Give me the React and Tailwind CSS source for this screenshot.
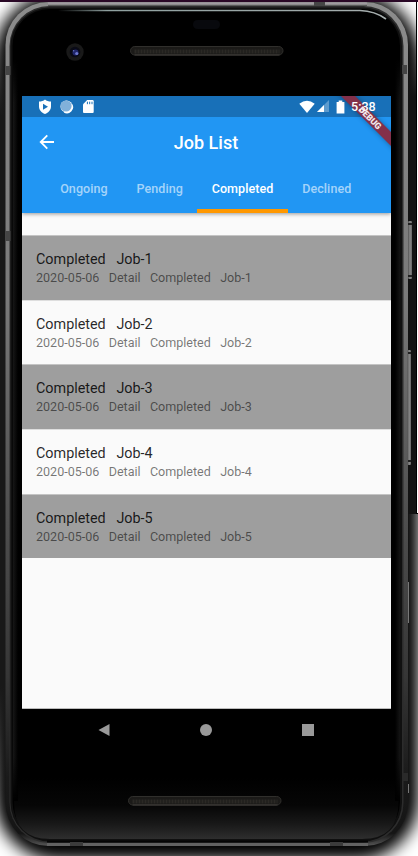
import React from "react";

const tabs = ["Ongoing", "Pending", "Completed", "Declined"];
const jobs = [1, 2, 3, 4, 5];

function Grille({ x, y }) {
  return (
    <g>
      <rect x={x} y={y} width="152.500" height="8.500" rx="4.250" fill="#1b1a18" stroke="#302f2c" />
      <path d={`M${x + 4} ${y + 5}h145`} stroke="#2b2925" strokeWidth="4" strokeDasharray="2 1" />
      <path d={`M${x + 4} ${y + 8.5}h145`} stroke="#4a4741" strokeWidth="0.8" />
    </g>
  );
}

function PhoneBody() {
  return (
    <svg className="absolute inset-0" width="418" height="856" viewBox="0 0 418 856" aria-hidden="true">
      <defs>
        <filter id="shadow" x="-20%" y="-20%" width="140%" height="140%">
          <feGaussianBlur stdDeviation="8" />
        </filter>
        <linearGradient id="metal" x1="0" y1="0" x2="0" y2="1">
          <stop offset="0" stopColor="#8c8c8c" />
          <stop offset="0.35" stopColor="#7a7a7a" />
          <stop offset="0.6" stopColor="#505050" />
          <stop offset="0.8" stopColor="#363636" />
          <stop offset="0.92" stopColor="#1a1a1a" />
          <stop offset="0.985" stopColor="#151515" />
          <stop offset="1" stopColor="#555" />
        </linearGradient>
        <linearGradient id="chin" x1="0" y1="0" x2="0" y2="1">
          <stop offset="0" stopColor="#000" />
          <stop offset="0.45" stopColor="#060606" />
          <stop offset="0.75" stopColor="#181818" />
          <stop offset="1" stopColor="#2e2e2e" />
        </linearGradient>
        <linearGradient id="sideL" x1="0" y1="0" x2="1" y2="0">
          <stop offset="0" stopColor="#202020" />
          <stop offset="1" stopColor="#000" />
        </linearGradient>
        <linearGradient id="sideR" x1="1" y1="0" x2="0" y2="0">
          <stop offset="0" stopColor="#1c1c1c" />
          <stop offset="1" stopColor="#000" />
        </linearGradient>
        <linearGradient id="fadeEnds" x1="0" y1="0" x2="0" y2="1">
          <stop offset="0" stopColor="#000" />
          <stop offset="0.06" stopColor="#000" stopOpacity="0" />
          <stop offset="0.94" stopColor="#000" stopOpacity="0" />
          <stop offset="1" stopColor="#000" />
        </linearGradient>
        <linearGradient id="strip" x1="0" y1="0" x2="0" y2="1">
          <stop offset="0" stopColor="#181818" stopOpacity="0" />
          <stop offset="0.1" stopColor="#181818" />
          <stop offset="0.85" stopColor="#181818" />
          <stop offset="1" stopColor="#181818" stopOpacity="0" />
        </linearGradient>
        <linearGradient id="stripR" x1="0" y1="0" x2="0" y2="1">
          <stop offset="0" stopColor="#131313" stopOpacity="0" />
          <stop offset="0.12" stopColor="#131313" />
          <stop offset="1" stopColor="#131313" />
        </linearGradient>
        <linearGradient id="shine" x1="0" y1="0" x2="1" y2="0">
          <stop offset="0" stopColor="#8fa09f" stopOpacity="0" />
          <stop offset="0.15" stopColor="#8fa09f" />
          <stop offset="1" stopColor="#a5adad" />
        </linearGradient>
        <linearGradient id="key" x1="0" y1="0" x2="1" y2="0">
          <stop offset="0" stopColor="#555" />
          <stop offset="0.5" stopColor="#888" />
          <stop offset="1" stopColor="#666" />
        </linearGradient>
      </defs>
      <rect width="418" height="856" fill="#fff" />
      <rect x="-5" y="-6" width="424" height="866" rx="62" fill="#000" filter="url(#shadow)" />
      <rect x="0" y="40" width="6" height="760" fill="url(#strip)" />
      <rect x="407" y="40" width="10" height="474" fill="url(#stripR)" />
      <path d="M416.5 2v511.500h1.500" stroke="#000" fill="none" />
      <path d="M417.5 2v511" stroke="#fff" />
      <path d="M0 1h418" stroke="#2a0826" strokeWidth="2" />

      <rect x="5.500" y="2" width="402.500" height="844" rx="43" fill="url(#metal)" />
      <rect x="9.500" y="6" width="394" height="837" rx="40" fill="#2c2c2c" />
      <rect x="10.500" y="7.500" width="391.500" height="834" rx="39" fill="#101010" />
      <rect x="12.500" y="9" width="387.500" height="830" rx="37" fill="#000" />
      <path d="M14 778H398.500V802Q398.500 839 362 839H50Q14 839 14 802Z" fill="url(#chin)" />
      <rect x="13" y="60" width="5" height="740" fill="url(#sideL)" opacity="0.700" />
      <rect x="395" y="60" width="5" height="740" fill="url(#sideR)" opacity="0.700" />
      <rect x="13" y="59" width="5" height="742" fill="url(#fadeEnds)" />
      <rect x="395" y="59" width="5" height="742" fill="url(#fadeEnds)" />

      <path d="M58 10.500H360Q375 11 386 19" stroke="url(#shine)" strokeWidth="1.700" fill="none" />
      <path d="M48 3.200H367" stroke="#a09aa0" strokeWidth="1.500" />
      <path d="M48 5.500H367" stroke="#5a5a5a" />
      <path d="M47 844.500H368" stroke="#626262" strokeWidth="3" />
      <path d="M47 841.500H368" stroke="#050505" strokeWidth="2" />
      <g fill="#454545">
        <rect x="5.500" y="66" width="5" height="9" />
        <rect x="5.500" y="231" width="5" height="10" />
        <rect x="402" y="65" width="5" height="9" />
        <rect x="314" y="2" width="11" height="4" />
        <rect x="402" y="773" width="6" height="8" fill="#2a2a2a" />
        <rect x="70" y="842" width="13" height="4" fill="#3b3b3b" />
        <rect x="330" y="842" width="13" height="4" fill="#3b3b3b" />
      </g>
      <rect x="408" y="221" width="4" height="58" rx="1" fill="url(#key)" />
      <rect x="407.500" y="350" width="3.500" height="115" rx="1" fill="url(#key)" />
      <path d="M408 224h4M408 276h4M408 353h3M408 461h3" stroke="#222" strokeWidth="2" />
      <path d="M408.500 582v41M408.500 784v9" stroke="#777" />

      <circle cx="75" cy="52" r="8.700" fill="#191919" />
      <circle cx="75" cy="52" r="5.300" fill="#090a16" />
      <circle cx="75.500" cy="52.500" r="3" fill="#20266b" />
      <circle cx="76.800" cy="53.500" r="1.600" fill="#6d78cf" />
      <circle cx="73.600" cy="50.700" r="0.800" fill="#6570b8" />
      <rect x="193" y="20" width="27" height="9" rx="4.500" fill="#08090d" />
      <Grille x={130.5} y={46.5} />
      <Grille x={128.5} y={796.5} />
    </svg>
  );
}

function DebugBanner() {
  return (
    <div className="pointer-events-none absolute top-0 right-0 h-[60px] w-[60px] overflow-hidden">
      <div className="absolute top-[16.500px] left-[-11.500px] flex h-[10px] w-[100px] rotate-45 items-center justify-center bg-[#83304a] text-[8.800px] leading-none font-black text-white/90 shadow-[0_0_5px_rgba(0,0,0,0.35)]">
        DEBUG
      </div>
    </div>
  );
}

function StatusBar() {
  return (
    <div className="relative z-20 flex h-[21px] shrink-0 items-center bg-[#1870b8] text-white">
      <DebugBanner />
      <svg className="ml-4" width="14" height="16" viewBox="0 0 14 16">
        <path d="M7 0.500C5.500 1.900 3.300 2.600 1 2.600v5C1 11 3.500 13.800 7 15c3.500-1.200 6-4 6-7.400v-5C10.700 2.600 8.500 1.900 7 0.500Z" fill="#fff" />
        <path d="M5 4.800l5 3-5 3Z" fill="#1870b8" />
      </svg>
      <svg className="ml-[7px]" width="15" height="15" viewBox="0 0 15 15">
        <path d="M13.200 5a6.200 6.200 0 0 1-8.500 8.500Z" fill="#fff" />
        <circle cx="7.500" cy="7.500" r="6" fill="#fff" />
        <circle cx="7" cy="7" r="5.600" fill="#81b1da" />
      </svg>
      <svg className="ml-[8px]" width="13" height="15" viewBox="0 0 13 15">
        <path d="M5.200 1H10.500Q11.700 1 11.700 2.200V13Q11.700 14 10.700 14H2Q1 14 1 13V5.200Z" fill="#fff" />
        <path d="M5.400 2.700v2.500M7.700 2.700v2.500M10 2.700v2.500" stroke="#1870b8" strokeWidth="1" />
      </svg>
      <svg className="ml-auto" width="16" height="14" viewBox="0 0 16 14">
        <path d="M0.300 3.700Q8-2 15.700 3.700L8 13Z" fill="#fff" />
      </svg>
      <svg className="ml-[1px]" width="14" height="13" viewBox="0 0 14 13">
        <path d="M13 0V12H1Z" fill="#5d9bce" />
        <path d="M8 4.900V12H1Z" fill="#fff" />
      </svg>
      <svg className="ml-[6px]" width="9" height="14" viewBox="0 0 9 14">
        <path d="M2.700 0.500h3.600V2H8.400V13.500H0.600V2H2.700Z" fill="#fff" />
      </svg>
      <span className="relative mr-[14px] ml-[6px] w-[26px] pt-px text-[12.560px] leading-none font-medium whitespace-nowrap">5:38</span>
    </div>
  );
}

export default function App() {
  return (
    <div className="relative h-[856px] w-[418px] overflow-hidden pt-24 pl-[22px] font-['Roboto',sans-serif]">
      <PhoneBody />
      <div className="relative flex h-[613px] w-[369px] flex-col overflow-hidden border-b border-[#bbb] bg-[#fafafa]">
        <StatusBar />
        <header className="relative z-10 h-24 shrink-0 bg-[#2196f3] text-white shadow-[0_1px_4px_rgba(0,0,0,0.4)]">
          <div className="grid h-[50px] grid-cols-[50px_1fr_51px] items-center">
            <svg className="ml-[17px]" width="16" height="16" viewBox="0 0 16 16">
              <path d="M15 8H2M8.300 1.400L1.700 8L8.300 14.600" fill="none" stroke="#fff" strokeWidth="1.800" />
            </svg>
            <h1 className="pt-px text-center text-[18px] font-medium">Job List</h1>
          </div>
          <nav className="flex h-[46px] pl-[23.800px]">
            {tabs.map((tab) => (
              <div
                key={tab}
                className={
                  tab === "Completed"
                    ? "border-b-4 border-[#ff9800] px-[14.350px] pt-[13px] text-[12.560px] leading-[18px] font-medium tracking-[0.070px]"
                    : "border-b-4 border-transparent px-[14.350px] pt-[13px] text-[12.560px] leading-[18px] font-medium tracking-[0.070px] text-white/60"
                }
              >
                {tab}
              </div>
            ))}
          </nav>
        </header>
        <ul className="mt-[22.300px]">
          {jobs.map((n) => (
            <li
              key={n}
              className={
                n % 2
                  ? "h-[64.600px] border-t border-[#c4c4c4] bg-[#9e9e9e] pt-[14px] pl-[14px] whitespace-pre"
                  : "h-[64.600px] border-t border-[#dedede] bg-[#fafafa] pt-[14px] pl-[14px] whitespace-pre"
              }
            >
              <p className="text-[14.360px] leading-[20px] text-black/85">{`Completed   Job-${n}`}</p>
              <p className="text-[12.560px] leading-[16.400px] text-black/54">{`2020-05-06   Detail   Completed   Job-${n}`}</p>
            </li>
          ))}
        </ul>
      </div>
      <div className="relative flex h-[42px] w-[369px] items-center pl-[75px]">
        <svg width="14" height="14" viewBox="0 0 14 14">
          <path d="M1.500 7L12.500 1V13Z" fill="#999" />
        </svg>
        <div className="ml-[89px] h-3 w-3 rounded-full bg-[#999]" />
        <div className="ml-[90px] h-[12px] w-[12px] bg-[#999]" />
      </div>
    </div>
  );
}
